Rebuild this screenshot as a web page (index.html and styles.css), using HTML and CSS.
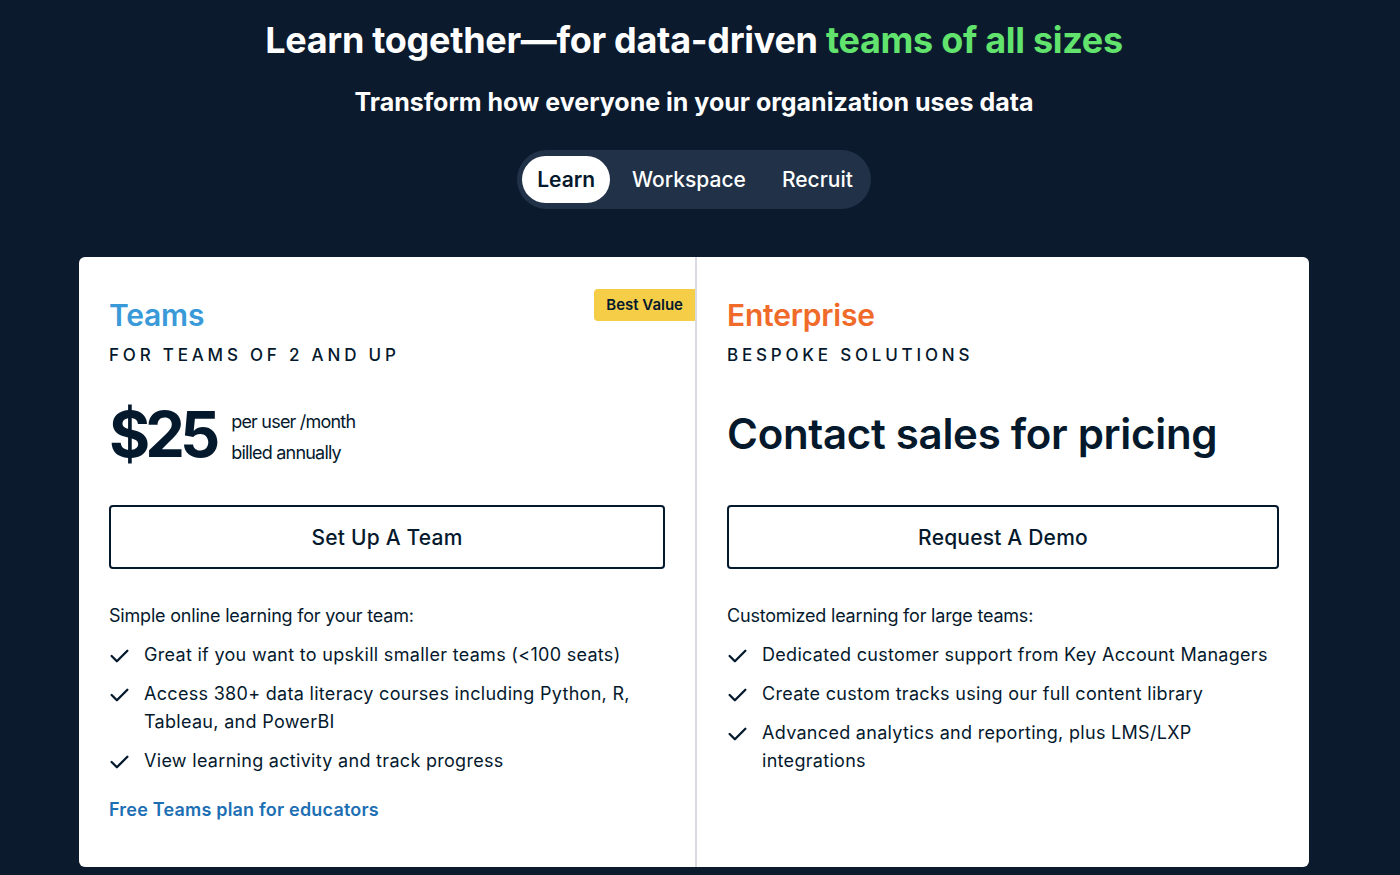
FILE: index.html
```html
<!DOCTYPE html>
<html>
<head>
<meta charset="utf-8">
<link rel="stylesheet" href="styles.css">
</head>
<body>
<main class="page">
  <h1 class="title">Learn together—for data-driven <span class="accent">teams of all sizes</span></h1>
  <p class="subtitle">Transform how everyone in your organization uses data</p>
  <nav class="tabs">
    <span class="tab active">Learn</span>
    <span class="tab">Workspace</span>
    <span class="tab">Recruit</span>
  </nav>
  <section class="card">
    <div class="plan plan-left">
      <span class="badge">Best Value</span>
      <h2 class="plan-name teams">Teams</h2>
      <p class="eyebrow">FOR TEAMS OF 2 AND UP</p>
      <div class="price-row">
        <span class="price">$25</span>
        <span class="price-meta"><span>per user /month</span><span>billed annually</span></span>
      </div>
      <a class="btn">Set Up A Team</a>
      <p class="intro">Simple online learning for your team:</p>
      <ul class="features">
        <li><svg class="check" viewBox="0 0 20 20"><path d="M2.5 10.5l5 5L17.5 5.5"/></svg><span>Great if you want to upskill smaller teams (&lt;100 seats)</span></li>
        <li><svg class="check" viewBox="0 0 20 20"><path d="M2.5 10.5l5 5L17.5 5.5"/></svg><span>Access 380+ data literacy courses including Python, R, Tableau, and PowerBI</span></li>
        <li><svg class="check" viewBox="0 0 20 20"><path d="M2.5 10.5l5 5L17.5 5.5"/></svg><span>View learning activity and track progress</span></li>
      </ul>
      <a class="link">Free Teams plan for educators</a>
    </div>
    <div class="plan plan-right">
      <h2 class="plan-name enterprise">Enterprise</h2>
      <p class="eyebrow">BESPOKE SOLUTIONS</p>
      <div class="contact">Contact sales for pricing</div>
      <a class="btn">Request A Demo</a>
      <p class="intro">Customized learning for large teams:</p>
      <ul class="features">
        <li><svg class="check" viewBox="0 0 20 20"><path d="M2.5 10.5l5 5L17.5 5.5"/></svg><span>Dedicated customer support from Key Account Managers</span></li>
        <li><svg class="check" viewBox="0 0 20 20"><path d="M2.5 10.5l5 5L17.5 5.5"/></svg><span>Create custom tracks using our full content library</span></li>
        <li><svg class="check" viewBox="0 0 20 20"><path d="M2.5 10.5l5 5L17.5 5.5"/></svg><span class="narrow">Advanced analytics and reporting, plus LMS/LXP integrations</span></li>
      </ul>
    </div>
  </section>
</main>
</body>
</html>
```
FILE: styles.css
```css
* { box-sizing: border-box; }
html, body { margin: 0; padding: 0; }
body {
  background: #0b1a2d;
  font-family: Inter, "Noto Sans", sans-serif;
  color: #05192d;
  height: 875px;
  overflow: hidden;
}
.page {
  display: flex;
  flex-direction: column;
  align-items: center;
  padding-top: 17px;
  padding-right: 12px;
}
.title {
  margin: 0;
  font-size: 36px;
  line-height: 46px;
  font-weight: 700;
  color: #fff;
  letter-spacing: -0.3px;
}
.accent { color: #62e36d; }
.subtitle {
  margin: 23px 0 0;
  font-size: 25px;
  line-height: 32px;
  font-weight: 700;
  color: #fff;
  letter-spacing: 0;
}
.tabs {
  margin-top: 32px;
  display: flex;
  align-items: center;
  padding: 6px 4px 6px 5px;
  background: #213147;
  border-radius: 30px;
  height: 59px;
}
.tab {
  color: #fff;
  font-size: 21px;
  font-weight: 500;
  padding: 0 14px;
  line-height: 47px;
  border-radius: 24px;
}
.tab + .tab { margin-left: 8px; }
.tab.active {
  background: #fff;
  color: #05192d;
  font-weight: 600;
  padding: 0 15px;
}
.card {
  margin-top: 48px;
  width: 1230px;
  height: 610px;
  background: #fff;
  border-radius: 6px;
  display: grid;
  grid-template-columns: 618px 1fr;
}
.plan {
  position: relative;
  padding: 40px 30px 0;
}
.plan-left { border-right: 2px solid #d9dbe3; }
.badge {
  position: absolute;
  right: 0;
  top: 32px;
  background: #f5cd47;
  color: #05192d;
  font-size: 15px;
  font-weight: 600;
  line-height: 32px;
  padding: 0 12px;
  border-radius: 4px 0 0 4px;
}
.plan-name {
  margin: 0;
  font-size: 30px;
  line-height: 36px;
  font-weight: 600;
  letter-spacing: -0.2px;
}
.teams { color: #3a9ad9; }
.enterprise { color: #f06a2a; }
.eyebrow {
  margin: 11px 0 0;
  font-size: 17px;
  line-height: 22px;
  font-weight: 500;
  letter-spacing: 3.8px;
}
.price-row {
  display: flex;
  align-items: center;
  margin-top: 32px;
  height: 72px;
}
.price {
  font-size: 63px;
  font-weight: 700;
  letter-spacing: -5px;
  line-height: 72px;
}
.price-meta {
  display: flex;
  flex-direction: column;
  margin-left: 16px;
  margin-top: 6px;
  font-size: 18px;
  line-height: 31px;
  letter-spacing: -0.8px;
}
.contact {
  margin-top: 32px;
  height: 72px;
  font-size: 42px;
  line-height: 72px;
  font-weight: 600;
  letter-spacing: -0.3px;
}
.btn {
  display: flex;
  align-items: center;
  justify-content: center;
  margin-top: 35px;
  height: 64px;
  border: 2px solid #05192d;
  border-radius: 4px;
  font-size: 21px;
  font-weight: 500;
  letter-spacing: 0.2px;
}
.intro {
  margin: 33px 0 0;
  font-size: 18px;
  line-height: 28px;
  letter-spacing: -0.2px;
}
.features {
  list-style: none;
  margin: 11px 0 0;
  padding: 0;
  display: flex;
  flex-direction: column;
  gap: 11px;
}
.features li {
  display: flex;
  gap: 14px;
  font-size: 18px;
  line-height: 28px;
  letter-spacing: 0.3px;
}
.plan-left .features li { padding-right: 14px; }
.narrow { max-width: 450px; }
.check {
  flex: none;
  width: 21px;
  height: 21px;
  margin-top: 4px;
  fill: none;
  stroke: #05192d;
  stroke-width: 2.2;
  stroke-linecap: round;
  stroke-linejoin: round;
}
.link {
  display: block;
  margin-top: 21px;
  font-size: 18px;
  line-height: 28px;
  font-weight: 600;
  color: #1d6fb4;
  letter-spacing: 0.2px;
}
```
